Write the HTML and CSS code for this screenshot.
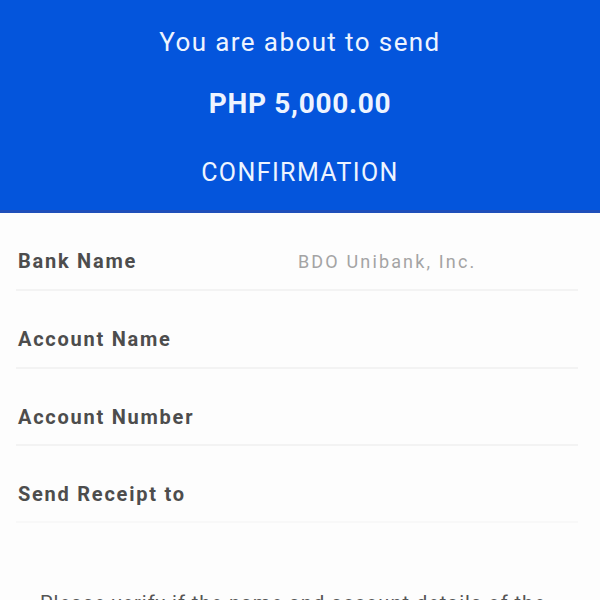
FILE: index.html
```html
<!DOCTYPE html>
<html lang="en">
<head>
<meta charset="utf-8">
<title>Confirmation</title>
<link rel="stylesheet" href="styles.css">
</head>
<body>
<div class="page">
  <header class="hero">
    <p class="hero-intro">You are about to send</p>
    <p class="hero-amount">PHP 5,000.00</p>
    <p class="hero-title">CONFIRMATION</p>
  </header>
  <section class="details">
    <div class="row">
      <span class="label">Bank Name</span>
      <span class="value">BDO Unibank, Inc.</span>
    </div>
    <div class="row">
      <span class="label">Account Name</span>
      <span class="value"></span>
    </div>
    <div class="row">
      <span class="label">Account Number</span>
      <span class="value"></span>
    </div>
    <div class="row row-last">
      <span class="label">Send Receipt to</span>
      <span class="value"></span>
    </div>
  </section>
  <p class="note">Please verify if the name and account details of the recipient are correct.</p>
</div>
</body>
</html>
```
FILE: styles.css
```css
* { box-sizing: border-box; }
html, body { margin: 0; padding: 0; }
body {
  background: #fdfdfd;
  font-family: Roboto, "Liberation Sans", sans-serif;
  width: 600px;
  height: 600px;
  overflow: hidden;
}
.page { display: flex; flex-direction: column; }
.hero {
  background: #0455dc;
  color: #eef4ff;
  text-align: center;
  height: 213px;
  padding-top: 24px;
  border-bottom: 3px solid #1f4fba;
  display: flex;
  flex-direction: column;
  align-items: center;
}
.hero p { margin: 0; }
.hero-intro {
  font-size: 26px;
  letter-spacing: 1.4px;
  line-height: 36px;
}
.hero-amount {
  font-size: 28px;
  font-weight: 700;
  letter-spacing: 0.7px;
  line-height: 36px;
  margin-top: 26px !important;
}
.hero-title {
  font-size: 25px;
  letter-spacing: 1.4px;
  line-height: 36px;
  margin-top: 33px !important;
}
.details {
  padding: 0 22px 0 16px;
}
.row {
  display: flex;
  align-items: center;
  height: 78px;
  padding: 20px 0 0 2px;
  border-bottom: 2px solid #f3f3f3;
}
.row:nth-child(3), .row-last { height: 77px; }
.row-last { border-bottom-color: #f8f8f8; }
.label {
  width: 280px;
  font-size: 20px;
  font-weight: 700;
  color: #4d4d4d;
  letter-spacing: 1.75px;
}
.value {
  font-size: 18px;
  color: #a4a4a4;
  letter-spacing: 2.15px;
}
.note {
  margin: 66px 0 0 0;
  padding: 0 40px;
  font-size: 20px;
  color: #555;
  letter-spacing: 1px;
  line-height: 28px;
}
```
